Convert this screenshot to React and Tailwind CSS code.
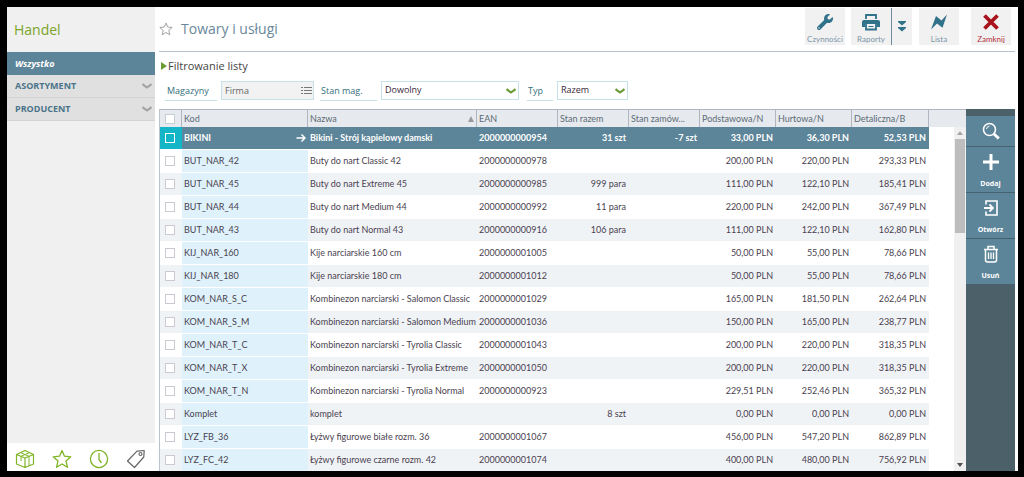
import React, { useState } from "react";
import { FaWrench } from "react-icons/fa";

const columns = [
  { key: "kod", label: "Kod", width: "w-[126px]" },
  { key: "nazwa", label: "Nazwa", width: "w-[169px]", sorted: true },
  { key: "ean", label: "EAN", width: "w-[81px]" },
  { key: "razem", label: "Stan razem", width: "w-[71px]", right: true },
  { key: "zamow", label: "Stan zamów...", width: "w-[71px]", right: true },
  { key: "podst", label: "Podstawowa/N", width: "w-[76px]", right: true },
  { key: "hurt", label: "Hurtowa/N", width: "w-[76px]", right: true },
  { key: "detal", label: "Detaliczna/B", width: "w-[77px]", right: true },
];

const products = [
  { kod: "BIKINI", nazwa: "Bikini - Strój kąpielowy damski", ean: "2000000000954", razem: "31 szt", zamow: "-7 szt", podst: "33,00 PLN", hurt: "36,30 PLN", detal: "52,53 PLN" },
  { kod: "BUT_NAR_42", nazwa: "Buty do nart Classic 42", ean: "2000000000978", podst: "200,00 PLN", hurt: "220,00 PLN", detal: "293,33 PLN" },
  { kod: "BUT_NAR_45", nazwa: "Buty do nart Extreme 45", ean: "2000000000985", razem: "999 para", podst: "111,00 PLN", hurt: "122,10 PLN", detal: "185,41 PLN" },
  { kod: "BUT_NAR_44", nazwa: "Buty do nart Medium 44", ean: "2000000000992", razem: "11 para", podst: "220,00 PLN", hurt: "242,00 PLN", detal: "367,49 PLN" },
  { kod: "BUT_NAR_43", nazwa: "Buty do nart Normal 43", ean: "2000000000916", razem: "106 para", podst: "111,00 PLN", hurt: "122,10 PLN", detal: "162,80 PLN" },
  { kod: "KIJ_NAR_160", nazwa: "Kije narciarskie 160 cm", ean: "2000000001005", podst: "50,00 PLN", hurt: "55,00 PLN", detal: "78,66 PLN" },
  { kod: "KIJ_NAR_180", nazwa: "Kije narciarskie 180 cm", ean: "2000000001012", podst: "50,00 PLN", hurt: "55,00 PLN", detal: "78,66 PLN" },
  { kod: "KOM_NAR_S_C", nazwa: "Kombinezon narciarski - Salomon Classic", ean: "2000000001029", podst: "165,00 PLN", hurt: "181,50 PLN", detal: "262,64 PLN" },
  { kod: "KOM_NAR_S_M", nazwa: "Kombinezon narciarski - Salomon Medium", ean: "2000000001036", podst: "150,00 PLN", hurt: "165,00 PLN", detal: "238,77 PLN" },
  { kod: "KOM_NAR_T_C", nazwa: "Kombinezon narciarski - Tyrolia Classic", ean: "2000000001043", podst: "200,00 PLN", hurt: "220,00 PLN", detal: "318,35 PLN" },
  { kod: "KOM_NAR_T_X", nazwa: "Kombinezon narciarski - Tyrolia Extreme", ean: "2000000001050", podst: "200,00 PLN", hurt: "220,00 PLN", detal: "318,35 PLN" },
  { kod: "KOM_NAR_T_N", nazwa: "Kombinezon narciarski - Tyrolia Normal", ean: "2000000000923", podst: "229,51 PLN", hurt: "252,46 PLN", detal: "365,32 PLN" },
  { kod: "Komplet", nazwa: "komplet", ean: "", razem: "8 szt", podst: "0,00 PLN", hurt: "0,00 PLN", detal: "0,00 PLN" },
  { kod: "LYZ_FB_36", nazwa: "Łyżwy figurowe białe rozm. 36", ean: "2000000001067", podst: "456,00 PLN", hurt: "547,20 PLN", detal: "862,89 PLN" },
  { kod: "LYZ_FC_42", nazwa: "Łyżwy figurowe czarne rozm. 42", ean: "2000000001074", podst: "400,00 PLN", hurt: "480,00 PLN", detal: "756,92 PLN" },
];

function Chevron({ className }) {
  return (
    <svg viewBox="0 0 10 6" className={className} fill="none" stroke="currentColor" strokeWidth="2.200">
      <path d="M0.600 1 C2 2.600 3.400 3.400 5 4.400 C6.600 3.400 8 2.600 9.400 1" />
    </svg>
  );
}

function StarIcon({ className }) {
  return (
    <svg viewBox="0 0 20 20" className={className} fill="none" stroke="currentColor" strokeWidth="1.300" strokeLinejoin="round">
      <path d="M10 1.500 L12.500 7.200 L18.800 7.800 L14 12 L15.500 18.300 L10 15 L4.500 18.300 L6 12 L1.200 7.800 L7.500 7.200 Z" />
    </svg>
  );
}

function BoxIcon() {
  return (
    <svg viewBox="0 0 20 20" className="size-5" fill="none" stroke="currentColor" strokeWidth="1.200" strokeLinejoin="round">
      <path d="M10 1.500 L18.500 5.500 V15 L10 18.500 L1.500 15 V5.500 Z M1.500 5.500 L10 9 L18.500 5.500 M10 9 V18.500" />
      <path d="M5.500 3.600 L14 7.300 V17 M14.500 3.600 L6 7.300 V12" strokeWidth="1" />
    </svg>
  );
}

function ClockIcon() {
  return (
    <svg viewBox="0 0 20 20" className="size-5" fill="none" stroke="currentColor" strokeWidth="1.300">
      <circle cx="10" cy="10" r="8.600" />
      <path d="M10 4 V10.500 L12.500 14" />
    </svg>
  );
}

function TagIcon() {
  return (
    <svg viewBox="0 0 20 20" className="size-5" fill="none" stroke="currentColor" strokeWidth="1.200" strokeLinejoin="round">
      <path d="M11 2.200 L18.200 1.500 L17.800 8 L8.500 18.500 L1.500 12 Z" />
      <circle cx="14.500" cy="5" r="1.500" />
    </svg>
  );
}

function PrinterIcon() {
  return (
    <svg viewBox="0 0 18 17" className="h-[17px] w-[18px]" fill="none" stroke="currentColor">
      <path d="M4 5 V1 H14 V5" strokeWidth="1.800" />
      <path d="M2 6 H16 Q18 6 18 8 V13 H15 V10 H3 V13 H0 V8 Q0 6 2 6 Z" fill="currentColor" stroke="none" />
      <path d="M4 10 V15.500 H14 V10" strokeWidth="1.800" />
      <path d="M6.500 12.500 H11.500" strokeWidth="1" />
    </svg>
  );
}

function BoltIcon() {
  return (
    <svg viewBox="0 0 18 16" className="h-4 w-[18px]" fill="currentColor">
      <path d="M1 15.500 L6 2 L11.500 6.500 L17 0.500 L12.500 13.800 L7 9.500 Z" />
    </svg>
  );
}

function CloseIcon() {
  return (
    <svg viewBox="0 0 16 16" className="size-4" fill="none" stroke="currentColor" strokeWidth="3.800">
      <path d="M1.500 1.500 L14.500 14.500 M14.500 1.500 L1.500 14.500" />
    </svg>
  );
}

function SearchIcon() {
  return (
    <svg viewBox="0 0 18 18" className="size-[18px]" fill="none" stroke="currentColor">
      <circle cx="7.500" cy="7.500" r="6" strokeWidth="1.600" />
      <path d="M4.500 7 A3.200 3.200 0 0 1 7.500 4.200" strokeWidth="1" />
      <path d="M12 12 L16.800 16.500" strokeWidth="3" />
    </svg>
  );
}

function PlusIcon() {
  return (
    <svg viewBox="0 0 18 18" className="size-[18px]" fill="none" stroke="currentColor" strokeWidth="3">
      <path d="M9 1 V17 M1 9 H17" />
    </svg>
  );
}

function OpenIcon() {
  return (
    <svg viewBox="0 0 18 18" className="size-[18px]" fill="none" stroke="currentColor" strokeWidth="1.600">
      <path d="M4 5.500 V2 H15 V16 H4 V12.500" />
      <path d="M2 9 H10.500 M7.500 5.500 L11 9 L7.500 12.500" strokeWidth="1.800" />
    </svg>
  );
}

function TrashIcon() {
  return (
    <svg viewBox="0 0 18 18" className="size-[18px]" fill="none" stroke="currentColor" strokeWidth="1.500">
      <path d="M2 4.500 H16 M6 4 V1.500 H12 V4 M3.500 4.500 V15 Q3.500 17 5.500 17 H12.500 Q14.500 17 14.500 15 V4.500" />
      <path d="M6.500 7.500 V14 M9 7.500 V14 M11.500 7.500 V14" strokeWidth="1.300" />
    </svg>
  );
}

function ToolbarButton({ icon, label, danger }) {
  return (
    <button
      className={`flex h-[37px] w-10 flex-col items-center justify-between bg-[#f1f1f1] pt-1.5 text-[8px] leading-3 ${
        danger ? "text-[#a9131d]" : "text-[#2f7289]"
      }`}
    >
      {icon}
      <span className={danger ? "text-[#b5303a]" : "text-[#7b95a7]"}>{label}</span>
    </button>
  );
}

function SideAction({ icon, label }) {
  return (
    <button
      aria-label={label || "Szukaj"}
      className={`flex w-full flex-col items-center border-b border-[#47626e] bg-[#5d8599] text-[7px] leading-2 font-bold text-white ${
        label ? "h-[46px] justify-between pt-1.5 pb-1" : "h-[31px] justify-center"
      }`}
    >
      {icon}
      {label && <span>{label}</span>}
    </button>
  );
}

function FilterSelect({ id, label, labelWidth, width, options }) {
  return (
    <>
      <label htmlFor={id} className={`h-5 border-b border-[#c9e0e6] pl-px leading-[19px] text-[#33707c] ${labelWidth}`}>
        {label}
      </label>
      <div className={`relative ${width}`}>
        <select id={id} className="h-[19px] w-full appearance-none border border-[#c5e2ea] bg-white pb-px pl-[3px] text-[9px] text-[#3a2838]">
          {options.map((o) => (
            <option key={o}>{o}</option>
          ))}
        </select>
        <Chevron className="pointer-events-none absolute top-[7px] right-[3px] h-1.5 w-2.5 text-[#6a9c36]" />
      </div>
    </>
  );
}

function Sidebar() {
  return (
    <aside className="flex w-[148px] shrink-0 flex-col bg-[#f0f0f0]">
      <h1 className="h-[45px] pl-[7px] text-sm leading-[45px] text-[#7ba428]">Handel</h1>
      <nav className="flex-1 text-[9px] font-bold">
        <a href="#all" className="block h-[23px] bg-[#5d8599] pl-2 leading-[23px] text-white italic">
          Wszystko
        </a>
        {["ASORTYMENT", "PRODUCENT"].map((name) => (
          <a key={name} href={`#${name}`} className="flex h-[23px] items-center justify-between border-b border-[#d3d3d3] bg-[#e0e0e0] pr-[3px] pl-2 text-[#4b7489]">
            {name}
            <Chevron className="h-1.5 w-2.5 text-[#a3a3a3]" />
          </a>
        ))}
      </nav>
      <div className="flex h-[28px] items-center gap-[17px] bg-white pt-1 pl-2 text-[#7fb526]">
        <button aria-label="Towary"><BoxIcon /></button>
        <button aria-label="Ulubione"><StarIcon className="size-5" /></button>
        <button aria-label="Historia"><ClockIcon /></button>
        <button aria-label="Etykiety" className="text-[#666]"><TagIcon /></button>
      </div>
    </aside>
  );
}

function ProductTable() {
  const [selected, setSelected] = useState("BIKINI");
  const box = "block size-[10px] appearance-none border";

  return (
    <div className="relative min-w-0 flex-1 overflow-hidden border-l border-[#bcc3ca]">
      <table className="w-full table-fixed border-separate border-spacing-0 font-['Lato',sans-serif] text-[9px] leading-3">
        <colgroup>
          <col className="w-[22px]" />
          {columns.map((c) => (
            <col key={c.key} className={c.width} />
          ))}
          <col />
        </colgroup>
        <thead>
          <tr className="h-[18px] bg-[#e6eaee] text-left text-[#5d6a76]">
            <th className="border-t border-r border-[#b0b5c0] p-0 pl-[5px]">
              <input type="checkbox" aria-label="Zaznacz wszystko" className={`${box} border-[#c5cdd5] bg-white`} />
            </th>
            {columns.map((c) => (
              <th key={c.key} className="border-t border-r border-[#b0b5c0] p-0 pl-0.5 font-normal whitespace-nowrap">
                <div className="flex items-center justify-between pr-0.5">
                  {c.label}
                  {c.sorted && (
                    <svg viewBox="0 0 6 6" className="size-1.5" fill="#9a9a9a">
                      <path d="M3 0 L6 6 H0 Z" />
                    </svg>
                  )}
                </div>
              </th>
            ))}
            <th className="border-t border-[#b0b5c0] p-0" />
          </tr>
        </thead>
        <tbody>
          {products.map((p, i) => {
            const active = p.kod === selected;
            const rowBg = active ? "bg-[#5d8599]" : i % 2 ? "bg-white" : "bg-[#f0f3f6]";
            return (
              <tr key={p.kod} onClick={() => setSelected(p.kod)} className={`h-[23px] ${active ? "text-white" : "text-[#4a3f50]"}`}>
                <td className={`border-b border-white p-0 pl-[5px] ${active ? "bg-[#14b5c6]" : rowBg}`}>
                  <input
                    type="checkbox"
                    aria-label={p.kod}
                    className={`${box} ${active ? "border-white" : "border-[#cdc8d2] bg-white"}`}
                  />
                </td>
                {columns.map((c) => (
                  <td
                    key={c.key}
                    className={`border-b border-white p-0 whitespace-nowrap ${
                      c.right ? "pr-[3px] text-right" : "pl-0.5"
                    } ${c.key === "kod" && !active ? "bg-[#dff2fb]" : rowBg} ${active ? "font-bold" : ""}`}
                  >
                    {c.key === "kod" && active ? (
                      <div className="flex items-center justify-between pr-0.5">
                        {p.kod}
                        <svg viewBox="0 0 10 10" className="size-2.5" fill="none" stroke="currentColor" strokeWidth="1.500">
                          <path d="M0.500 5 H9 M5.500 1.500 L9 5 L5.500 8.500" />
                        </svg>
                      </div>
                    ) : (
                      p[c.key]
                    )}
                  </td>
                ))}
                <td />
              </tr>
            );
          })}
        </tbody>
      </table>

      {/* scrollbar */}
      <div className="absolute top-[18px] right-0 bottom-0 flex w-3 flex-col items-center bg-[#f0f0f0]">
        <svg viewBox="0 0 6 4" className="my-1 h-1 w-1.5" fill="#a5a5a5">
          <path d="M3 0 L6 4 H0 Z" />
        </svg>
        <div className="h-[94px] w-2.5 bg-[#bdbdbd]" />
        <svg viewBox="0 0 6 4" className="mt-auto mb-1 h-1 w-1.5" fill="#505050">
          <path d="M0 0 H6 L3 4 Z" />
        </svg>
      </div>
    </div>
  );
}

function App() {
  return (
    <div className="h-screen overflow-hidden bg-black pt-[7px] pr-1.5 pb-1.5 pl-[7px] font-['Open_Sans',sans-serif]">
      <div className="flex h-full bg-white">
        <Sidebar />
        <main className="flex min-w-0 flex-1 flex-col pr-[3px] pl-1">
          <header className="flex h-[45px] shrink-0 items-center justify-between border-b border-[#b5c5ce]">
            <div className="flex items-center gap-2">
              <button aria-label="Ulubione" className="text-[#999]">
                <StarIcon className="size-3.5" />
              </button>
              <h2 className="text-sm text-[#69889b]">Towary i usługi</h2>
            </div>
            <div className="flex h-full items-start pt-px pr-1 font-['Lato',sans-serif]">
              <ToolbarButton icon={<FaWrench className="size-4" />} label="Czynności" />
              <div className="ml-1.5 flex">
                <ToolbarButton icon={<PrinterIcon />} label="Raporty" />
                <button aria-label="Więcej raportów" className="flex w-[21px] items-center justify-center border-l border-[#6d8c9c] bg-[#f1f1f1] text-[#2f7289]">
                  <svg viewBox="0 0 8 11" className="h-[11px] w-2" fill="currentColor">
                    <path d="M0 0 H8 V1 L4 4.500 L0 1 Z M0 6 H8 V7 L4 10.500 L0 7 Z" />
                  </svg>
                </button>
              </div>
              <div className="ml-[7px] flex gap-3">
                <ToolbarButton icon={<BoltIcon />} label="Lista" />
                <ToolbarButton icon={<CloseIcon />} label="Zamknij" danger />
              </div>
            </div>
          </header>

          <section className="h-[57px] shrink-0 text-[9px]">
            <button className="mt-1.5 flex h-4 items-center gap-px pl-0.5 text-[11px] text-[#454545]">
              <svg viewBox="0 0 6 8" className="h-2 w-1.5" fill="#6a9c36">
                <path d="M0 0 L6 4 L0 8 Z" />
              </svg>
              Filtrowanie listy
            </button>
            <div className="mt-[7px] flex pl-1.5">
              <label htmlFor="magazyny" className="h-5 w-[52px] border-b border-[#c9e0e6] pl-0.5 leading-[19px] text-[#33707c]">
                Magazyny
              </label>
              <div className="relative ml-1 w-[93px]">
                <input id="magazyny" readOnly value="Firma" className="h-[19px] w-full border border-[#c5e2ea] bg-[#f2f2f2] pb-px pl-[3px] text-[9px] text-[#666]" />
                <svg viewBox="0 0 11 9" className="pointer-events-none absolute top-[5px] right-0.5 h-[9px] w-[11px]" fill="none" stroke="#777">
                  <path d="M0 1.500 H2 M3 1.500 H11 M0 4.500 H2 M3 4.500 H11 M0 7.500 H2 M3 7.500 H11" />
                </svg>
              </div>
              <div className="ml-1.5 flex gap-1">
                <FilterSelect id="stan" label="Stan mag." labelWidth="w-[57px]" width="w-[138px]" options={["Dowolny", "Dodatni", "Zerowy"]} />
              </div>
              <div className="ml-2 flex gap-1">
                <FilterSelect id="typ" label="Typ" labelWidth="w-[26px]" width="w-[71px]" options={["Razem", "Towar", "Usługa"]} />
              </div>
            </div>
          </section>

          <div className="flex min-h-0 flex-1">
            <ProductTable />
            <div className="w-[49px] shrink-0 bg-[#4c6069] pt-[7px]">
              <SideAction icon={<SearchIcon />} />
              <SideAction icon={<PlusIcon />} label="Dodaj" />
              <SideAction icon={<OpenIcon />} label="Otwórz" />
              <SideAction icon={<TrashIcon />} label="Usuń" />
            </div>
          </div>
        </main>
      </div>
    </div>
  );
}

export default App;
